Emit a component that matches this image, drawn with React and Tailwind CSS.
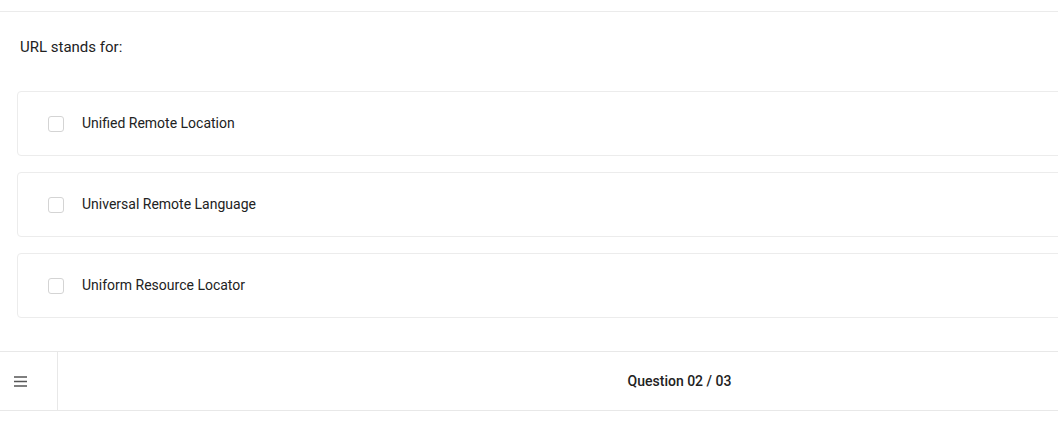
import React from "react";

const options = [
  { id: 1, label: "Unified Remote Location" },
  { id: 2, label: "Universal Remote Language" },
  { id: 3, label: "Uniform Resource Locator" },
];

function Option({ label }) {
  return (
    <label className="flex h-[65px] items-center rounded-[4px] border border-[#ececec] bg-white pl-[30px] cursor-pointer">
      <span className="h-[16px] w-[16px] shrink-0 rounded-[3px] border border-[#d4d4d4] bg-white" />
      <span className="ml-[18px] text-[14px] text-[#222]">{label}</span>
    </label>
  );
}

export default function App() {
  return (
    <div className="w-full h-[435px] overflow-hidden bg-white" style={{ fontFamily: "Roboto, 'Liberation Sans', sans-serif" }}>
      <div className="w-[1301px]">
        <div className="h-[11px]" />
        <div className="border-t border-[#ebebeb]">
          <p className="pl-[20px] pt-[24px] text-[15px] leading-[22px] text-[#222]">URL stands for:</p>
          <div className="mt-[33px] flex flex-col gap-4 pl-[17px] pr-[20px]">
            {options.map((o) => (
              <Option key={o.id} label={o.label} />
            ))}
          </div>
        </div>

        {/* Footer bar */}
        <div className="mt-[33px] flex h-[60px] border-y border-[#e8e8e8]">
          <div className="flex w-[58px] shrink-0 items-center border-r border-[#e8e8e8] pl-[14px] text-[#555]">
            <svg width="13" height="11" viewBox="0 0 13 11" fill="none" stroke="currentColor" strokeWidth="1.4">
              <path d="M0 1h13M0 5.5h13M0 10h13" />
            </svg>
          </div>
          <div className="flex flex-1 items-center justify-center text-[14px] font-medium text-[#222]">
            Question 02 / 03
          </div>
        </div>
      </div>
    </div>
  );
}
